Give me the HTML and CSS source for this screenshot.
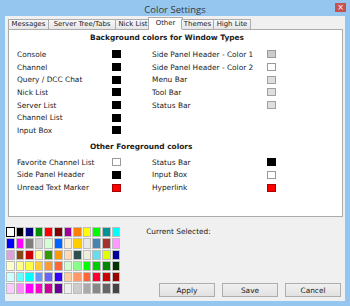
FILE: index.html
```html
<!DOCTYPE html>
<html lang="en">
<head>
  <meta charset="UTF-8" />
  <title>Color Settings</title>
  <link rel="stylesheet" href="styles.css">
</head>
<body>
  <div class="window">
    <div class="titlebar">
      <span></span>
      <span class="title">Color Settings</span>
      <span class="close">&#215;</span>
    </div>

    <div class="client">
      <div class="tabs">
        <div class="tab w-messages">Messages</div>
        <div class="tab w-server">Server Tree/Tabs</div>
        <div class="tab w-nick">Nick List</div>
        <div class="tab active w-other">Other</div>
        <div class="tab w-themes">Themes</div>
        <div class="tab w-hilite">High Lite</div>
      </div>

      <div class="panel">
        <div class="heading first">Background colors for Window Types</div>
        <div class="section">
          <div class="col left">
            <div class="row"><span class="label">Console</span><span class="swatch black"></span></div>
            <div class="row"><span class="label">Channel</span><span class="swatch black"></span></div>
            <div class="row"><span class="label">Query / DCC Chat</span><span class="swatch black"></span></div>
            <div class="row"><span class="label">Nick List</span><span class="swatch black"></span></div>
            <div class="row"><span class="label">Server List</span><span class="swatch black"></span></div>
            <div class="row"><span class="label">Channel List</span><span class="swatch black"></span></div>
            <div class="row"><span class="label">Input Box</span><span class="swatch black"></span></div>
          </div>
          <div class="col right">
            <div class="row"><span class="label">Side Panel Header - Color 1</span><span class="swatch gray"></span></div>
            <div class="row"><span class="label">Side Panel Header - Color 2</span><span class="swatch white"></span></div>
            <div class="row"><span class="label">Menu Bar</span><span class="swatch light"></span></div>
            <div class="row"><span class="label">Tool Bar</span><span class="swatch light"></span></div>
            <div class="row"><span class="label">Status Bar</span><span class="swatch light"></span></div>
          </div>
        </div>

        <div class="heading">Other Foreground colors</div>
        <div class="section">
          <div class="col left">
            <div class="row"><span class="label">Favorite Channel List</span><span class="swatch white"></span></div>
            <div class="row"><span class="label">Side Panel Header</span><span class="swatch black"></span></div>
            <div class="row"><span class="label">Unread Text Marker</span><span class="swatch red"></span></div>
          </div>
          <div class="col right">
            <div class="row"><span class="label">Status Bar</span><span class="swatch black"></span></div>
            <div class="row"><span class="label">Input Box</span><span class="swatch white"></span></div>
            <div class="row"><span class="label">Hyperlink</span><span class="swatch red"></span></div>
          </div>
        </div>
      </div>

      <div class="bottom">
        <div class="palette" id="palette"></div>
        <div class="side">
          <div class="current">Current Selected:</div>
          <div class="buttons">
            <button class="btn">Apply</button>
            <button class="btn">Save</button>
            <button class="btn">Cancel</button>
          </div>
        </div>
      </div>
    </div>
  </div>

  <script>
    const colors = [
      "#ffffff","#000000","#00007f","#009300","#ff0000","#7f0000","#9c009c","#fc7f00","#ffff00","#00fc00","#009393","#00ffff",
      "#0000fc","#ff00ff","#7f7f7f","#d2d2d2","#d4ffd4","#0066ff","#ffead2","#ffcc00","#e8e8e8","#4682b4","#a53030","#ff99ff",
      "#dda0dd","#8b4513","#cc0000","#ffff99","#339900","#ff9900","#ffdab9","#2f4f4f","#eeeedd","#66ddee","#ddff00","#000099",
      "#ffffcc","#ffff88","#ffff44","#ffcc33","#ff9933","#ff6633","#ccffcc","#88ff88","#00ff00","#00cc00","#008800","#003300",
      "#ccffff","#66ffff","#00ffff","#6699ff","#6666ff","#3300ff","#ffcc99","#ff9966","#ff6633","#ff0033","#cc0000","#990000",
      "#ffccff","#ff88ff","#ff00ff","#ff00cc","#cc0099","#660099","#eeeeee","#cccccc","#aaaaaa","#888888","#666666","#444444"
    ];

    const palette = document.getElementById("palette");
    colors.forEach(function (c, i) {
      const cell = document.createElement("div");
      cell.className = i === 0 ? "cell selected" : "cell";
      cell.style.background = c;
      palette.appendChild(cell);
    });
  </script>
</body>
</html>
```

FILE: styles.css
```css
body {
  margin: 0;
  padding: 0;
  font-family: 'DejaVu Sans', sans-serif;
  color: #1a1a1a;
}

.window {
  width: 350px;
  height: 306px;
  background-color: #94c6f0;
  box-sizing: border-box;
  padding: 0 5px 5px 5px;
  display: flex;
  flex-direction: column;
}

.titlebar {
  height: 16px;
  display: grid;
  grid-template-columns: 1fr auto 1fr;
  align-items: center;
}

.title {
  font-family: 'Open Sans', sans-serif;
  font-size: 9.5px;
  color: #3a3a3a;
  margin-top: 2px;
}

.close {
  justify-self: end;
  align-self: start;
  margin-top: 3px;
  width: 11px;
  height: 9px;
  background-color: #c75050;
  color: white;
  font-size: 8px;
  line-height: 9px;
  text-align: center;
  margin-right: -1px;
}

.client {
  flex: 1;
  background-color: #f0f0f0;
  padding: 2px 2px 4px 3px;
  display: flex;
  flex-direction: column;
}

.tabs {
  display: flex;
  align-items: flex-end;
  height: 11px;
  position: relative;
  z-index: 1;
}

.tab {
  height: 10px;
  box-sizing: border-box;
  font-size: 6.9px;
  line-height: 9px;
  text-align: center;
  white-space: nowrap;
  border: 1px solid #acacac;
  border-bottom: none;
  margin-right: -1px;
  background: linear-gradient(#f6f6f6, #e6e6e6);
}

.tab.active {
  height: 13px;
  background: white;
  margin: 0 -2px 0 -2px;
  padding-top: 1px;
  margin-bottom: -1px;
}

.w-messages { width: 41px; }
.w-server { width: 68px; }
.w-nick { width: 36px; }
.w-other { width: 35px; }
.w-themes { width: 33px; }
.w-hilite { width: 38px; }

.panel {
  width: 335px;
  height: 188px;
  box-sizing: border-box;
  background-color: white;
  border: 1px solid #acacac;
}

.heading {
  font-weight: bold;
  font-size: 7.4px;
  line-height: 9px;
  padding-left: 81px;
  margin: 5px 0 5px 0;
}

.heading.first {
  margin-top: 3px;
  margin-bottom: 6px;
}

.section {
  display: flex;
}

.col {
  display: flex;
  flex-direction: column;
}

.col.left {
  width: 135px;
  padding-left: 8px;
}

.row {
  height: 12.7px;
  display: flex;
  align-items: center;
}

.label {
  font-size: 7.4px;
  line-height: 9px;
}

.left .label {
  width: 95px;
}

.right .label {
  width: 115px;
}

.swatch {
  width: 9px;
  height: 8px;
  box-sizing: border-box;
  border: 1px solid #000;
}

.black { background-color: #000; }
.red { background-color: #ff0000; border-color: #a00; }
.white { background-color: #fff; border-color: #9a9a9a; }
.gray { background-color: #cbcbcb; border-color: #9a9a9a; }
.light { background-color: #dedede; border-color: #a0a0a0; }

.bottom {
  display: flex;
  margin-top: 10px;
  height: 70px;
  margin-left: -2px;
}

.palette {
  display: grid;
  grid-template-columns: repeat(12, 8.6px);
  grid-template-rows: repeat(6, 10.3px);
  gap: 1px;
  background-color: #f4f4f4;
  align-self: flex-start;
}

.cell {
  box-sizing: border-box;
  border: 1px solid #bdbdbd;
}

.cell.selected {
  border: 1px solid #000;
  box-shadow: inset 0 0 0 1px #fff;
}

.side {
  flex: 1;
  display: flex;
  flex-direction: column;
  justify-content: space-between;
}

.current {
  font-size: 7.4px;
  line-height: 9px;
  padding-left: 26px;
}

.buttons {
  display: flex;
  justify-content: flex-end;
  gap: 7px;
  padding-right: 2px;
}

.btn {
  width: 56px;
  height: 14px;
  padding: 0;
  font-family: 'DejaVu Sans', sans-serif;
  font-size: 7.4px;
  color: #1a1a1a;
  background: linear-gradient(#f0f0f0, #e2e2e2);
  border: 1px solid #adadad;
  border-radius: 0;
}
```
